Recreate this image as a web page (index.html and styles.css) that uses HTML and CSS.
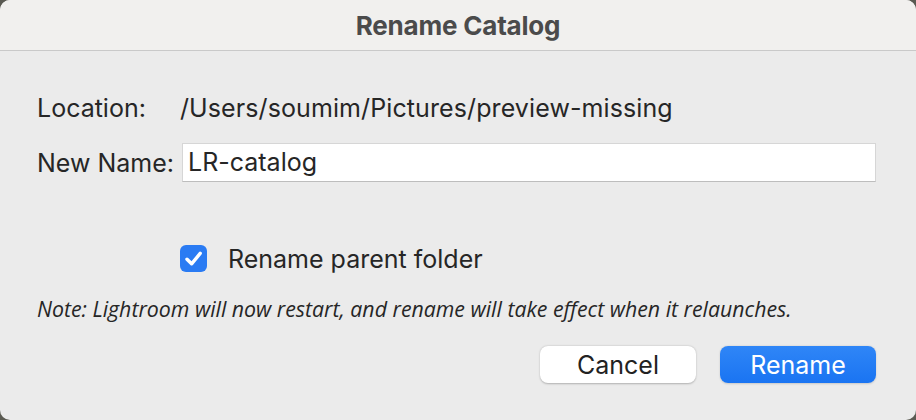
FILE: index.html
```html
<!DOCTYPE html>
<html>
<head>
<meta charset="utf-8">
<link rel="stylesheet" href="styles.css">
</head>
<body>
<div class="window">
  <div class="titlebar"><span class="title">Rename Catalog</span></div>
  <div class="content">
    <div class="form">
      <div class="label">Location:</div>
      <div class="value">/Users/soumim/Pictures/preview-missing</div>
      <div class="label">New Name:</div>
      <div class="input">LR-catalog</div>
    </div>
    <div class="check-row">
      <span class="checkbox">
        <svg width="27" height="27" viewBox="0 0 27 27"><rect x="0" y="0" width="27" height="27" rx="6" fill="#2a7bf3"/><path d="M7 14.2 L11.6 18.8 L20.2 8.4" fill="none" stroke="#fff" stroke-width="3.4" stroke-linecap="round" stroke-linejoin="round"/></svg>
      </span>
      <span class="check-label">Rename parent folder</span>
    </div>
    <div class="note">Note: Lightroom will now restart, and rename will take effect when it relaunches.</div>
    <div class="buttons">
      <div class="btn btn-cancel">Cancel</div>
      <div class="btn btn-primary">Rename</div>
    </div>
  </div>
</div>
</body>
</html>
```
FILE: styles.css
```css
html, body {
  margin: 0;
  padding: 0;
  background: #5a5a52;
}
.window {
  width: 916px;
  height: 420px;
  background: #ebebeb;
  border-radius: 10px;
  overflow: hidden;
  display: flex;
  flex-direction: column;
  font-family: Inter, "Liberation Sans", sans-serif;
  color: #262626;
}
.titlebar {
  height: 50px;
  background: #f1f0ee;
  border-bottom: 1px solid #c9c9c9;
  display: flex;
  align-items: center;
  justify-content: center;
}
.title {
  font-size: 26px;
  font-weight: 700;
  color: #4b4b4b;
  letter-spacing: -0.2px;
  margin-top: 1px;
}
.content {
  padding: 42px 40px 0 37px;
  display: flex;
  flex-direction: column;
}
.form {
  display: grid;
  grid-template-columns: 143px 1fr;
  row-gap: 20px;
  align-items: center;
  font-size: 25px;
  line-height: 30px;
}
.value {
  letter-spacing: 0.1px;
}
.input {
  margin-left: 2px;
  height: 39px;
  box-sizing: border-box;
  background: #fff;
  border: 1px solid #d6d6d6;
  border-bottom-color: #bdbdbd;
  padding-left: 5px;
  line-height: 37px;
}
.check-row {
  margin-top: 63px;
  margin-left: 143px;
  display: flex;
  align-items: center;
  height: 27px;
}
.checkbox {
  display: flex;
  width: 27px;
  height: 27px;
}
.check-label {
  margin-left: 21px;
  font-size: 25px;
}
.note {
  margin-top: 24px;
  font-family: "Open Sans", sans-serif;
  font-style: italic;
  font-size: 21.3px;
  line-height: 26px;
  color: #262626;
}
.buttons {
  margin-top: 24px;
  display: flex;
  justify-content: flex-end;
  gap: 24px;
}
.btn {
  width: 156px;
  height: 37px;
  border-radius: 8px;
  box-sizing: border-box;
  display: flex;
  align-items: center;
  justify-content: center;
  font-size: 25px;
}
.btn-cancel {
  background: #fff;
  box-shadow: 0 0.5px 2px rgba(0,0,0,0.25);
  color: #222;
}
.btn-primary {
  background: linear-gradient(#2f86f7, #1a74f2);
  color: #fff;
  box-shadow: 0 0.5px 2px rgba(0,0,0,0.15);
}
```
